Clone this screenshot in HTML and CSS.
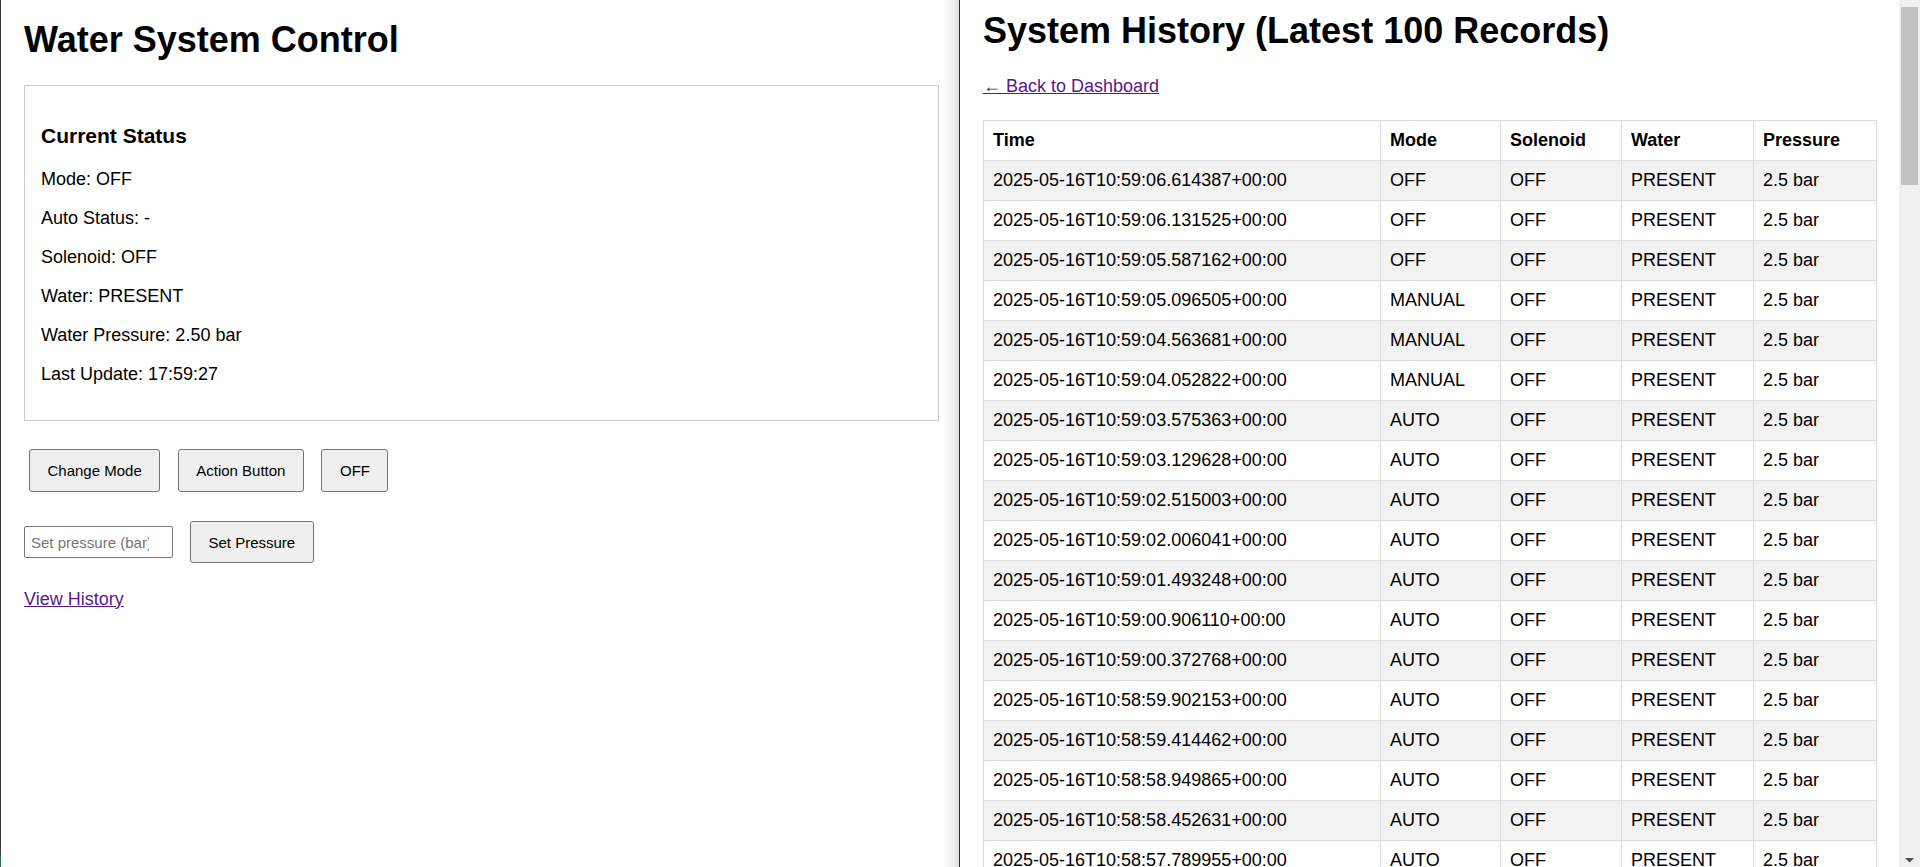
FILE: index.html
```html
<!DOCTYPE html>
<html lang="en">
<head>
<meta charset="utf-8">
<title>Water System Control</title>
<link rel="stylesheet" href="styles.css">
</head>
<body>
<div class="desk">
  <div class="edge"></div>
  <section class="win win-left">
    <h1 class="title">Water System Control</h1>
    <div class="card">
      <h3 class="card-title">Current Status</h3>
      <p class="stat">Mode: OFF</p>
      <p class="stat">Auto Status: -</p>
      <p class="stat">Solenoid: OFF</p>
      <p class="stat">Water: PRESENT</p>
      <p class="stat">Water Pressure: 2.50 bar</p>
      <p class="stat">Last Update: 17:59:27</p>
    </div>
    <div class="controls">
      <button class="btn">Change Mode</button>
      <button class="btn">Action Button</button>
      <button class="btn">OFF</button>
    </div>
    <div class="pressure-row">
      <input class="pressure-input" type="number" placeholder="Set pressure (bar)">
      <button class="btn btn-set">Set Pressure</button>
    </div>
    <a class="link history-link" href="#history">View History</a>
  </section>
  <div class="divider"></div>
  <section class="win win-right">
    <div class="pane">
      <h1 class="title title-right">System History (Latest 100 Records)</h1>
      <a class="link back-link" href="#dashboard">&larr; Back to Dashboard</a>
      <table class="history">
        <colgroup>
          <col class="c-time"><col class="c-mode"><col class="c-sol"><col class="c-water"><col class="c-press">
        </colgroup>
        <tr><th>Time</th><th>Mode</th><th>Solenoid</th><th>Water</th><th>Pressure</th></tr>
        <tr><td>2025-05-16T10:59:06.614387+00:00</td><td>OFF</td><td>OFF</td><td>PRESENT</td><td>2.5 bar</td></tr>
        <tr><td>2025-05-16T10:59:06.131525+00:00</td><td>OFF</td><td>OFF</td><td>PRESENT</td><td>2.5 bar</td></tr>
        <tr><td>2025-05-16T10:59:05.587162+00:00</td><td>OFF</td><td>OFF</td><td>PRESENT</td><td>2.5 bar</td></tr>
        <tr><td>2025-05-16T10:59:05.096505+00:00</td><td>MANUAL</td><td>OFF</td><td>PRESENT</td><td>2.5 bar</td></tr>
        <tr><td>2025-05-16T10:59:04.563681+00:00</td><td>MANUAL</td><td>OFF</td><td>PRESENT</td><td>2.5 bar</td></tr>
        <tr><td>2025-05-16T10:59:04.052822+00:00</td><td>MANUAL</td><td>OFF</td><td>PRESENT</td><td>2.5 bar</td></tr>
        <tr><td>2025-05-16T10:59:03.575363+00:00</td><td>AUTO</td><td>OFF</td><td>PRESENT</td><td>2.5 bar</td></tr>
        <tr><td>2025-05-16T10:59:03.129628+00:00</td><td>AUTO</td><td>OFF</td><td>PRESENT</td><td>2.5 bar</td></tr>
        <tr><td>2025-05-16T10:59:02.515003+00:00</td><td>AUTO</td><td>OFF</td><td>PRESENT</td><td>2.5 bar</td></tr>
        <tr><td>2025-05-16T10:59:02.006041+00:00</td><td>AUTO</td><td>OFF</td><td>PRESENT</td><td>2.5 bar</td></tr>
        <tr><td>2025-05-16T10:59:01.493248+00:00</td><td>AUTO</td><td>OFF</td><td>PRESENT</td><td>2.5 bar</td></tr>
        <tr><td>2025-05-16T10:59:00.906110+00:00</td><td>AUTO</td><td>OFF</td><td>PRESENT</td><td>2.5 bar</td></tr>
        <tr><td>2025-05-16T10:59:00.372768+00:00</td><td>AUTO</td><td>OFF</td><td>PRESENT</td><td>2.5 bar</td></tr>
        <tr><td>2025-05-16T10:58:59.902153+00:00</td><td>AUTO</td><td>OFF</td><td>PRESENT</td><td>2.5 bar</td></tr>
        <tr><td>2025-05-16T10:58:59.414462+00:00</td><td>AUTO</td><td>OFF</td><td>PRESENT</td><td>2.5 bar</td></tr>
        <tr><td>2025-05-16T10:58:58.949865+00:00</td><td>AUTO</td><td>OFF</td><td>PRESENT</td><td>2.5 bar</td></tr>
        <tr><td>2025-05-16T10:58:58.452631+00:00</td><td>AUTO</td><td>OFF</td><td>PRESENT</td><td>2.5 bar</td></tr>
        <tr><td>2025-05-16T10:58:57.789955+00:00</td><td>AUTO</td><td>OFF</td><td>PRESENT</td><td>2.5 bar</td></tr>
      </table>
    </div>
    <div class="scrollbar">
      <div class="thumb"></div>
      <svg class="arrow" width="21" height="8" viewBox="0 0 21 8"><path d="M6 1 L15 1 L10.5 5.5 Z" fill="#505050"/></svg>
    </div>
  </section>
</div>
</body>
</html>
```

FILE: styles.css
```css
* { box-sizing: border-box; }
html, body {
  margin: 0;
  padding: 0;
  width: 1920px;
  height: 867px;
  overflow: hidden;
  background: #ffffff;
  font-family: "Liberation Sans", Arial, sans-serif;
  color: #000;
}
.desk {
  display: flex;
  width: 1920px;
  height: 867px;
  overflow: hidden;
}
.edge {
  width: 1px;
  flex: none;
  background: linear-gradient(#3a3a3a 0, #3a3a3a 855px, #2f6b5e 855px);
}
.win {
  height: 867px;
  overflow: hidden;
  background: #fff;
}
.win-left {
  width: 958px;
  flex: none;
  padding: 0 20px 0 23px;
  background: linear-gradient(to right, #ffffff 0, #ffffff 942px, #f4f4f4 950px, #dddddd 958px);
}
.divider {
  width: 1px;
  flex: none;
  background: #2b2b2b;
}
.win-right {
  width: 960px;
  flex: none;
  display: flex;
}
.title {
  margin: 19px 0 25px;
  font-size: 36px;
  line-height: 41px;
  font-weight: bold;
}
.card {
  border: 1px solid #cccccc;
  padding: 17px 16px 17px;
}
.card-title {
  margin: 21px 0;
  font-size: 21px;
  line-height: 24px;
  font-weight: bold;
}
.stat {
  margin: 18px 0;
  font-size: 18px;
  line-height: 21px;
}
.controls {
  display: flex;
  gap: 17.5px;
  margin: 28px 0 0 5px;
}
.btn {
  height: 43px;
  padding: 0 17.5px;
  font-family: "Liberation Sans", Arial, sans-serif;
  font-size: 15px;
  color: #000;
  background: #efefef;
  border: 1px solid #767676;
  border-radius: 3px;
}
.pressure-row {
  display: flex;
  align-items: center;
  gap: 17px;
  margin-top: 29px;
}
.btn-set { height: 42px; }
.pressure-input {
  width: 149px;
  height: 32px;
  padding: 0 8px 0 6px;
  font-family: "Liberation Sans", Arial, sans-serif;
  font-size: 15px;
  border: 1px solid #767676;
  border-radius: 2px;
  background: #fff;
}
.pressure-input::placeholder { color: #757575; }
.link {
  color: #551a8b;
  text-decoration: underline;
  font-size: 18px;
  line-height: 21px;
}
.history-link {
  display: inline-block;
  margin-top: 25.5px;
}
.pane {
  flex: 1;
  height: 867px;
  overflow: hidden;
  padding: 0 23px;
}
.title-right { margin: 10px 0 25px; }
.back-link {
  display: inline-block;
  margin-bottom: 23px;
}
.history {
  width: 893px;
  border-collapse: collapse;
  table-layout: fixed;
  font-size: 18px;
  line-height: 21px;
}
.c-time { width: 397px; }
.c-mode { width: 120px; }
.c-sol { width: 121px; }
.c-water { width: 132px; }
.c-press { width: 123px; }
.history th, .history td {
  border: 1px solid #dddddd;
  padding: 9px;
  text-align: left;
  white-space: nowrap;
}
.history th { font-weight: bold; }
.history tr:nth-child(even) { background: #f2f2f2; }
.scrollbar {
  width: 21px;
  flex: none;
  height: 867px;
  background: #f1f1f1;
  display: flex;
  flex-direction: column;
  align-items: center;
}
.thumb {
  margin-top: 7px;
  width: 17px;
  height: 178px;
  background: #c1c1c1;
}
.arrow {
  margin-top: auto;
  margin-bottom: 2px;
  display: block;
}
```
